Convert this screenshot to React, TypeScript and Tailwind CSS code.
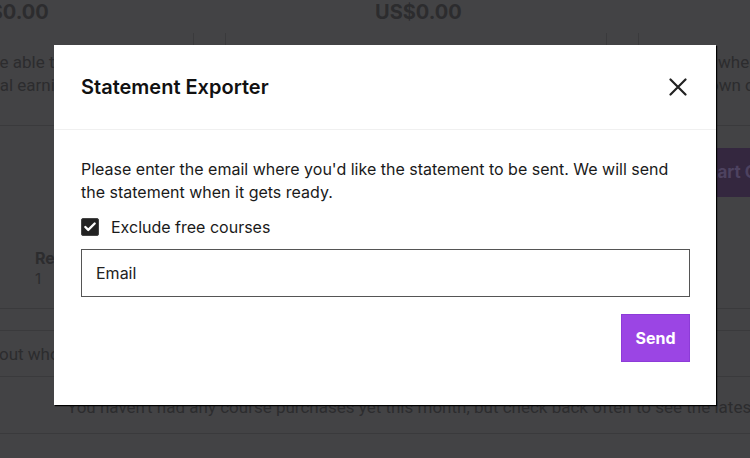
import { Check } from "lucide-react";

function Background() {
  return (
    <div className="flex w-[750px] flex-col text-[#2c2c2e]">
      <div className="flex h-[33px] items-start">
        <div className="ml-[-38px] w-[232px] text-[20px] font-bold leading-[25px]">US$0.00</div>
        <div className="ml-[181px] text-[20px] font-bold leading-[25px]">US$0.00</div>
      </div>

      <div className="flex h-[93px] border-b border-[#3a3a3c] font-['Roboto',sans-serif]">
        <div className="w-[194px] shrink-0 border-r border-[#3a3a3c] pt-[18px] text-[17px] leading-[23px] whitespace-nowrap">
          <div className="ml-[-10px]">be able to withdraw</div>
          <div className="ml-[-21px]">total earnings</div>
        </div>
        <div className="ml-[31px] w-[382px] shrink-0 border-x border-[#3a3a3c]" />
        <div className="ml-[31px] w-[112px] shrink-0 border-l border-[#3a3a3c] pt-[18px] text-[17px] leading-[23px] whitespace-nowrap">
          <div className="ml-[79px]">where</div>
          <div className="ml-[70px]">own costs</div>
        </div>
      </div>

      <div className="flex h-[183px] flex-col border-b border-[#3a3a3c]">
        <div className="mt-[22px] ml-[680px] flex h-[49px] w-[120px] items-center bg-[#34273f] pl-[20px] text-[17px] font-bold text-[#4d4260] whitespace-nowrap">
          Start Course
        </div>
        <div className="mt-[51px] ml-[35px] text-[16px] font-bold leading-[20px]">Revenue</div>
        <div className="ml-[35px] text-[15px] leading-[22px]">1</div>
      </div>

      <div className="h-[22px] border-b border-[#3a3a3c]" />

      <div className="flex h-[46px] items-center border-b border-[#3a3a3c] pt-[2px] font-['Roboto',sans-serif] text-[17px] whitespace-nowrap">
        <span className="ml-[-1px]">out who bought your courses</span>
      </div>

      <div className="flex h-[57px] items-center border-b border-[#3a3a3c] pl-[67px] pt-[6px] font-['Roboto',sans-serif] text-[17px] whitespace-nowrap">
        You haven't had any course purchases yet this month, but check back often to see the latest
      </div>
    </div>
  );
}

function StatementModal() {
  return (
    <div className="flex h-[360px] w-[662px] flex-col bg-white shadow-[1px_1px_1px_#000]">
      <div className="flex h-[85px] shrink-0 items-center justify-between border-b border-[#f0f0f0] pl-[27px] pr-[29px]">
        <h2 className="text-[20px] font-semibold text-[#111]">Statement Exporter</h2>
        <button className="text-[#222]">
          <svg width="18" height="18" viewBox="0 0 18 18" fill="none" stroke="currentColor" strokeWidth="2.2" strokeLinecap="round">
            <path d="M1.5 1.5L16.5 16.5M16.5 1.5L1.5 16.5" />
          </svg>
        </button>
      </div>

      <div className="flex flex-col pl-[27px] pr-[26px] pt-[28px]">
        <p className="text-[16px] leading-[23px] text-[#1a1a1a]">
          Please enter the email where you'd like the statement to be sent. We will send the statement when it gets ready.
        </p>

        <label className="mt-[11px] flex h-[24px] items-center gap-[12px] text-[16px] text-[#1a1a1a]">
          <span className="flex h-[18px] w-[18px] items-center justify-center rounded-[2px] border border-[#444] bg-[#222]">
            <Check size={14} strokeWidth={4} className="text-white" />
          </span>
          Exclude free courses
        </label>

        <input
          placeholder="Email"
          className="mt-[10px] h-[48px] w-full border border-[#555] px-[14px] text-[16px] text-[#222] placeholder:text-[#222] outline-none"
        />

        <div className="mt-[17px] flex justify-end">
          <button className="h-[48px] w-[69px] border border-[#8d3bd8] bg-[#9b45e4] text-[16px] font-bold text-white">
            Send
          </button>
        </div>
      </div>
    </div>
  );
}

export default function App() {
  return (
    <div className="relative h-[458px] w-[750px] overflow-hidden bg-[#434345] font-['Inter',sans-serif]">
      <Background />
      <div className="absolute inset-0 flex items-start pl-[54px] pt-[45px]">
        <StatementModal />
      </div>
    </div>
  );
}
